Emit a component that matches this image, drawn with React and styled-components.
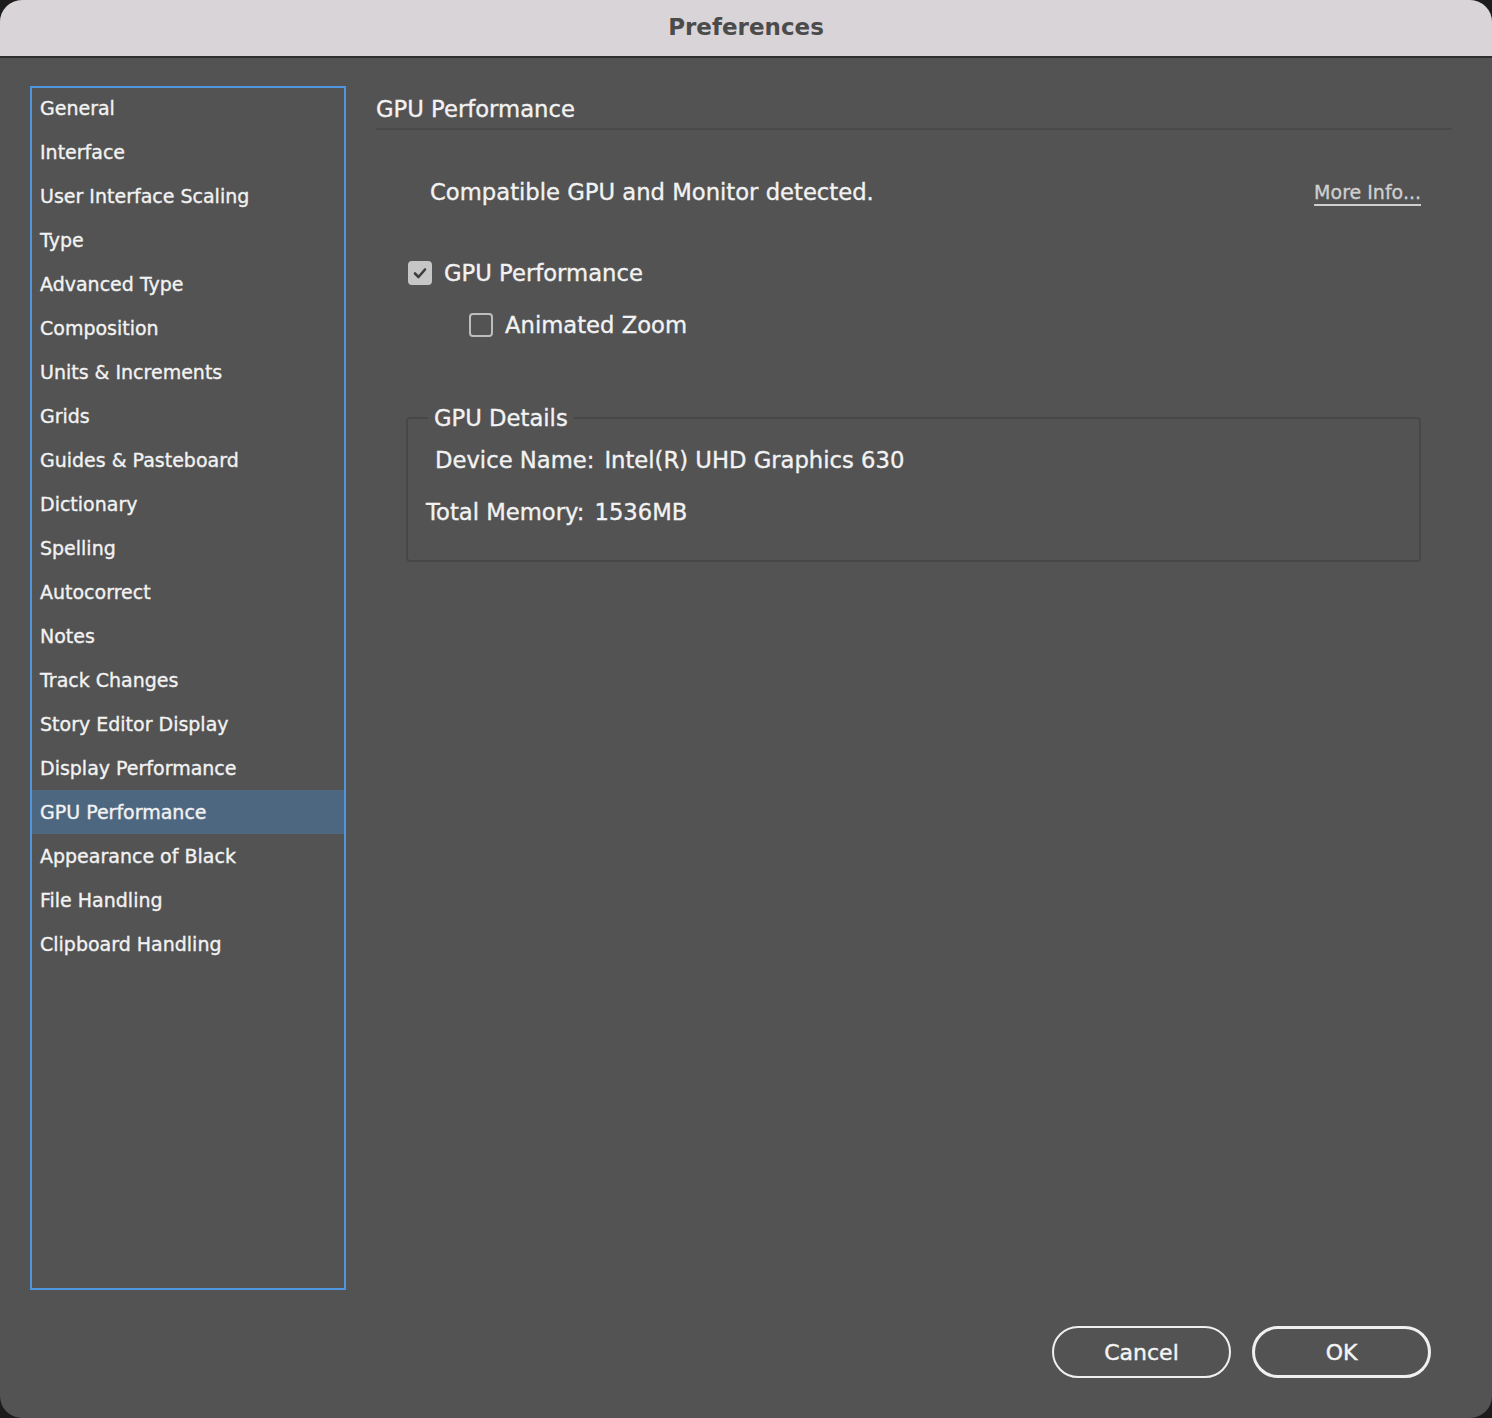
import React from 'react'
import styled, { createGlobalStyle } from 'styled-components'

const GlobalStyle = createGlobalStyle`
  html, body {
    margin: 0;
    padding: 0;
    background: #1c1c1c;
  }
  * {
    box-sizing: border-box;
  }
`;

const Window = styled.div`
  width: 1492px;
  height: 1418px;
  display: flex;
  flex-direction: column;
  background: #535353;
  border-radius: 22px;
  overflow: hidden;
  font-family: "DejaVu Sans", "Liberation Sans", sans-serif;
  color: #f2f2f2;
  -webkit-text-stroke: 0.35px currentColor;
`;

const TitleBar = styled.div`
  height: 58px;
  flex: none;
  display: flex;
  align-items: center;
  justify-content: center;
  padding-bottom: 2px;
  background: #d9d4d7;
  border-bottom: 2px solid #2f2f2f;
  color: #4b4b4b;
  font-size: 23px;
  font-weight: bold;
  -webkit-text-stroke: 0;
`;

const Body = styled.div`
  flex: 1;
  display: flex;
  flex-direction: column;
  padding: 28px 40px 40px 30px;
`;

const Columns = styled.div`
  display: flex;
  gap: 30px;
`;

const Sidebar = styled.ul`
  width: 316px;
  height: 1204px;
  flex: none;
  margin: 0;
  padding: 0;
  list-style: none;
  border: 2px solid #4f98e0;
`;

const NavItem = styled.li`
  height: 44px;
  display: flex;
  align-items: center;
  padding-left: 8px;
  font-size: 19px;
  background: ${({ $active }) => ($active ? '#4e6781' : 'transparent')};
  &:first-child {
    margin-top: -2px;
  }
`;

const Main = styled.div`
  flex: 1;
  display: flex;
  flex-direction: column;
`;

const Heading = styled.h2`
  margin: 0;
  height: 44px;
  padding-top: 4px;
  display: flex;
  align-items: center;
  font-size: 22.7px;
  font-weight: normal;
  border-bottom: 2px solid #4a4a4a;
`;

const StatusRow = styled.div`
  margin-top: 46px;
  padding: 0 31px 0 54px;
  height: 32px;
  display: flex;
  align-items: center;
  justify-content: space-between;
  font-size: 22.7px;
`;

const MoreInfo = styled.a`
  font-size: 19px;
  color: #cfcfcf;
  text-decoration: underline;
  text-underline-offset: 5px;
  text-decoration-thickness: 2px;
  cursor: pointer;
`;

const CheckRow = styled.label`
  height: 32px;
  display: flex;
  align-items: center;
  gap: 12px;
  margin-top: ${({ $top }) => $top}px;
  padding-left: ${({ $indent }) => $indent}px;
  font-size: 22.7px;
`;

const Box = styled.span`
  width: 24px;
  height: 24px;
  flex: none;
  border-radius: 4px;
  display: flex;
  align-items: center;
  justify-content: center;
  background: ${({ $checked }) => ($checked ? '#c6c6c6' : 'transparent')};
  border: 2px solid ${({ $checked }) => ($checked ? '#c6c6c6' : '#bdbdbd')};
`;

const GroupBox = styled.fieldset`
  margin: 61px 31px 0 30px;
  padding: 0 0 32px 20px;
  border: 2px solid #474747;
  border-radius: 4px;
`;

const Legend = styled.legend`
  padding: 0 6px;
  height: 32px;
  line-height: 32px;
  font-size: 22.7px;
`;

const DetailRow = styled.div`
  height: 32px;
  display: flex;
  align-items: center;
  gap: 10px;
  margin-top: ${({ $top }) => $top}px;
  margin-left: ${({ $shift }) => $shift}px;
  font-size: 22.7px;
`;

const Footer = styled.div`
  margin-top: 36px;
  padding-right: 21px;
  display: flex;
  justify-content: flex-end;
  gap: 21px;
`;

const Button = styled.button`
  width: 179px;
  height: 52px;
  border-radius: 26px;
  background: transparent;
  color: #f4f4f4;
  font-family: inherit;
  font-size: 22px;
  -webkit-text-stroke: 0.4px currentColor;
  border: ${({ $primary }) => ($primary ? '3px' : '2px')} solid #f0f0f0;
  cursor: pointer;
`;

const navItems = [
  'General',
  'Interface',
  'User Interface Scaling',
  'Type',
  'Advanced Type',
  'Composition',
  'Units & Increments',
  'Grids',
  'Guides & Pasteboard',
  'Dictionary',
  'Spelling',
  'Autocorrect',
  'Notes',
  'Track Changes',
  'Story Editor Display',
  'Display Performance',
  'GPU Performance',
  'Appearance of Black',
  'File Handling',
  'Clipboard Handling',
];

const Check = () => (
  <svg width="16" height="16" viewBox="0 0 16 16">
    <path d="M3 8.5 L6.5 12 L13 4.5" fill="none" stroke="#3e3e3e" strokeWidth="2.6" strokeLinecap="round" strokeLinejoin="round" />
  </svg>
);

const App = () => {
  return (
    <>
      <GlobalStyle />
      <Window>
        <TitleBar>Preferences</TitleBar>
        <Body>
          <Columns>
            <Sidebar>
              {navItems.map((item) => (
                <NavItem key={item} $active={item === 'GPU Performance'}>{item}</NavItem>
              ))}
            </Sidebar>
            <Main>
              <Heading>GPU Performance</Heading>
              <StatusRow>
                <span>Compatible GPU and Monitor detected.</span>
                <MoreInfo>More Info...</MoreInfo>
              </StatusRow>
              <CheckRow $top={49} $indent={32}>
                <Box $checked><Check /></Box>
                GPU Performance
              </CheckRow>
              <CheckRow $top={20} $indent={93}>
                <Box />
                Animated Zoom
              </CheckRow>
              <GroupBox>
                <Legend>GPU Details</Legend>
                <DetailRow $top={10} $shift={7}>
                  <span>Device Name:</span>
                  <span>Intel(R) UHD Graphics 630</span>
                </DetailRow>
                <DetailRow $top={20} $shift={-2}>
                  <span>Total Memory:</span>
                  <span>1536MB</span>
                </DetailRow>
              </GroupBox>
            </Main>
          </Columns>
          <Footer>
            <Button>Cancel</Button>
            <Button $primary>OK</Button>
          </Footer>
        </Body>
      </Window>
    </>
  )
}

export default App;
